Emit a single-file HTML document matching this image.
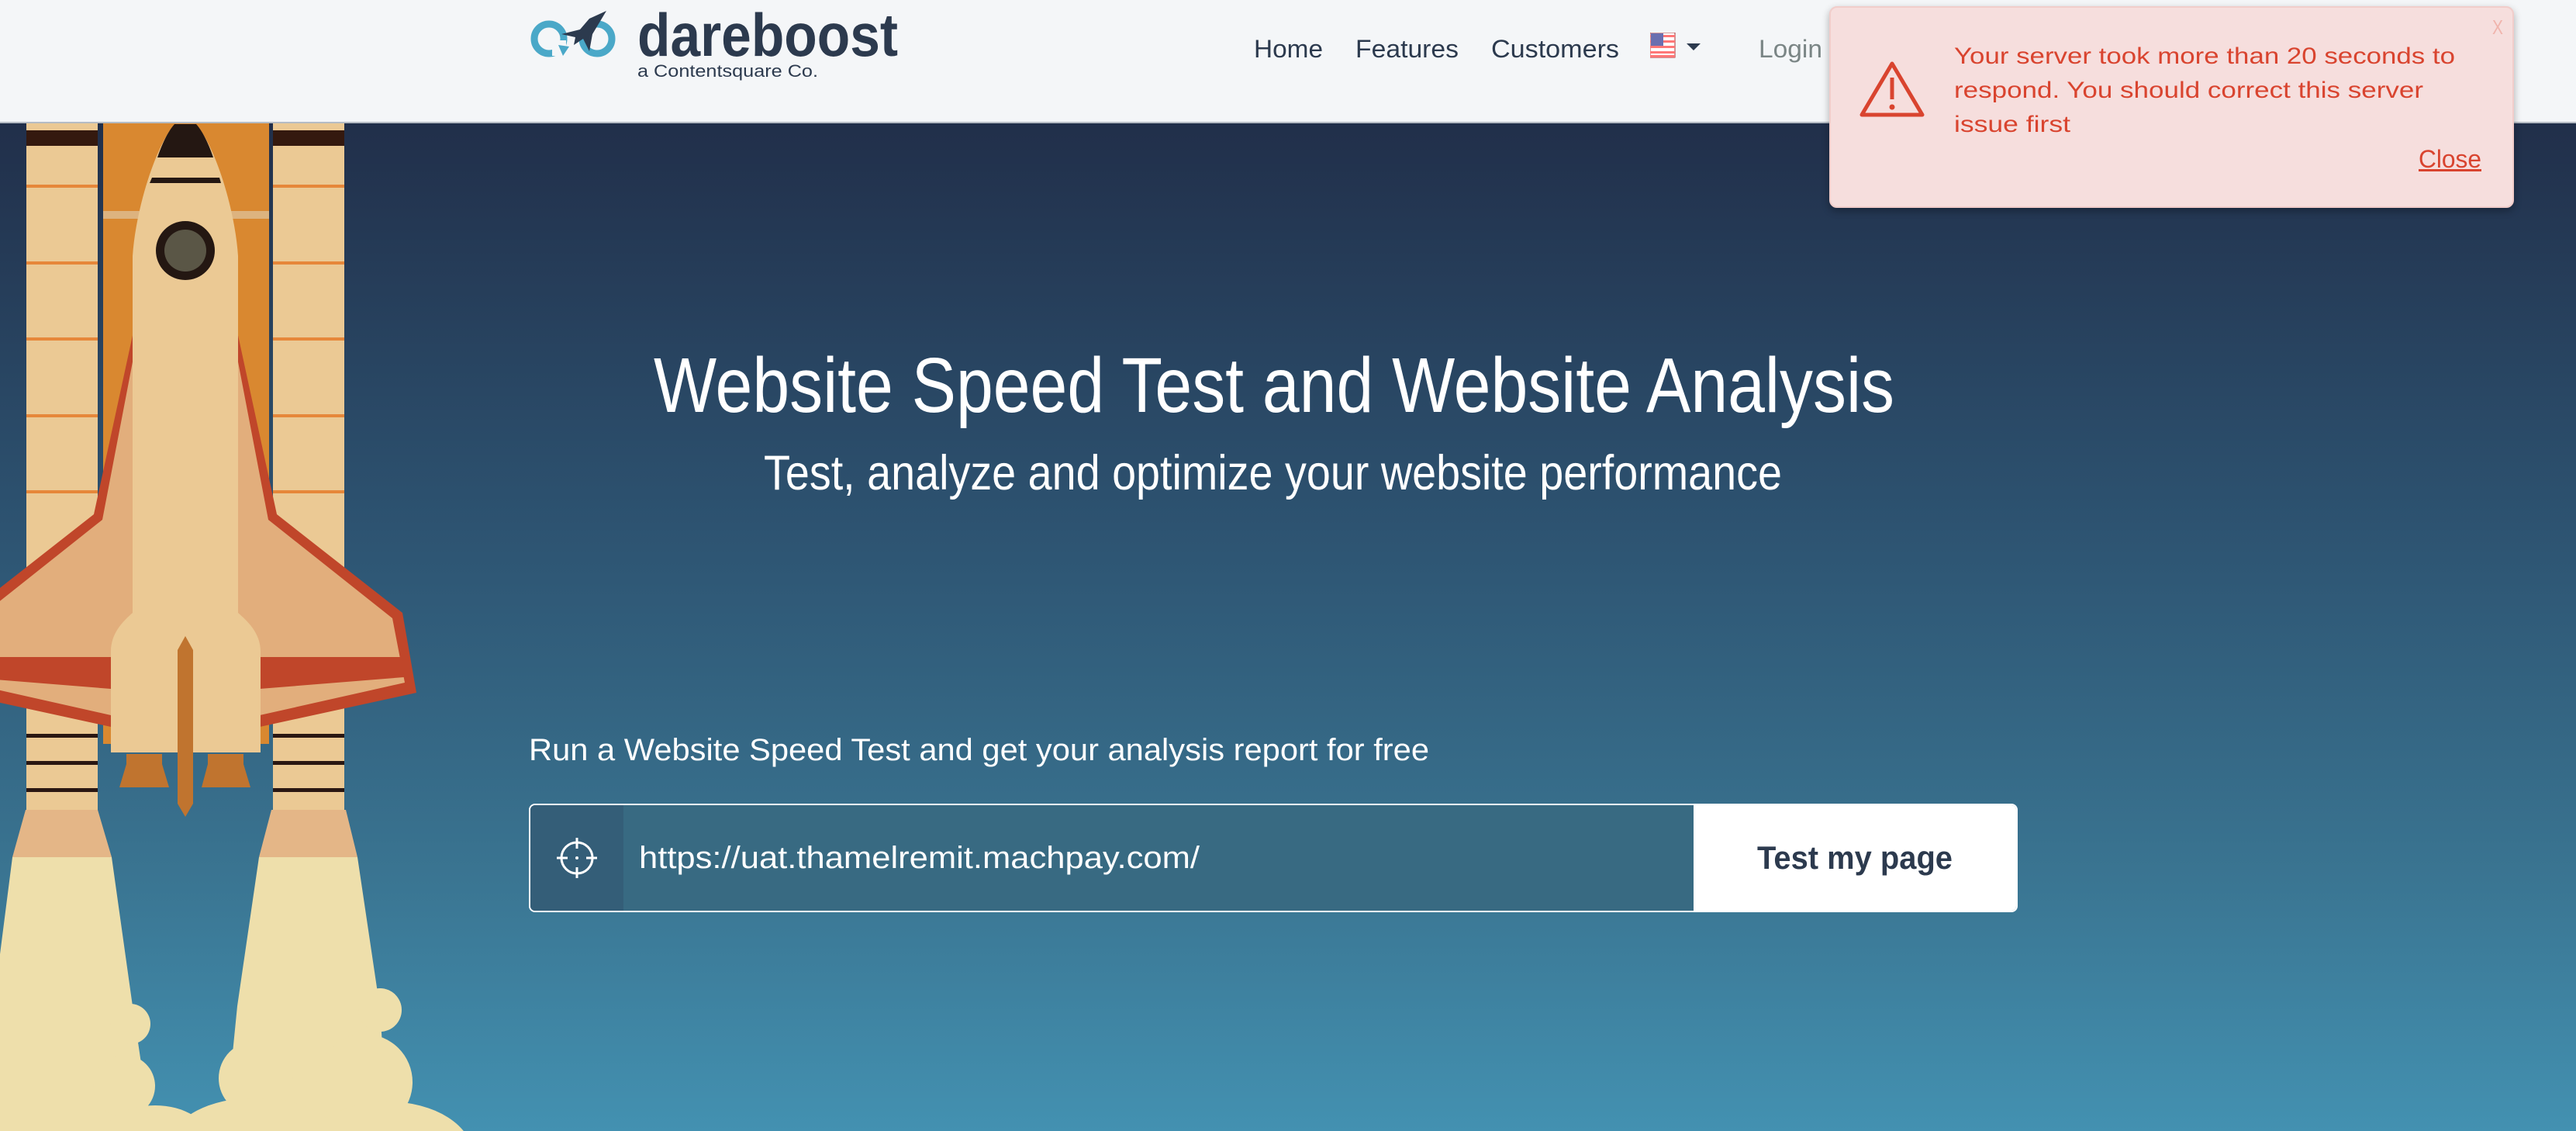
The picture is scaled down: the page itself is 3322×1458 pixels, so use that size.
<!DOCTYPE html>
<html><head><meta charset="utf-8">
<style>
*{margin:0;padding:0;box-sizing:border-box}
html,body{width:3322px;height:1458px;overflow:hidden}
body{position:relative;font-family:"Liberation Sans",sans-serif;background:#f4f6f8}
.f{position:absolute;white-space:nowrap;line-height:1;transform-origin:0 0;display:inline-block}
#hdr{position:absolute;left:0;top:0;width:3322px;height:159px;background:#f4f6f8;border-bottom:2px solid #b5bcc4}
#hero{position:absolute;left:0;top:159px;width:3322px;height:1299px;background:linear-gradient(#212f4a 0%,#2d5371 40%,#3a7592 75%,#4391b1 100%)}
.nav{color:#2c3a4e;font-size:32px}
.w{color:#fff}
#box{position:absolute;left:682px;top:1036px;width:1920px;height:140px;border:2px solid #fff;border-radius:8px;overflow:hidden;background:#386a82}
#ic{position:absolute;left:0;top:0;width:120px;height:100%;background:#345e78}
#btn{position:absolute;left:1500px;top:0;right:0;height:100%;background:#fff}
#alert{position:absolute;left:2359px;top:8px;width:883px;height:260px;background:#f6dedd;border:2px solid #f1cdca;border-radius:10px;box-shadow:0 4px 10px rgba(0,0,0,.3)}
.r{color:#d9442f;font-size:30px}
</style></head><body>
<div id="hdr"></div>
<svg style="position:absolute;left:0;top:0" width="1200" height="160">
 <circle cx="708" cy="50" r="19" fill="none" stroke="#4aa8c8" stroke-width="9"/>
 <circle cx="770" cy="50" r="19" fill="none" stroke="#4aa8c8" stroke-width="9"/>
 <rect x="712" y="52" width="18" height="20" fill="#f4f6f8"/>
 <path d="M720 58 L734 60 L726 72 Z" fill="#4aa8c8"/>
 <path d="M782 14 L760 24 L748 38 L724 44 L742 48 L740 58 L752 50 L760 66 L764 44 Z" fill="#2c3a4e"/>
</svg>
<span class="f" style="left:822px;top:6px;font-size:78px;font-weight:bold;color:#2c3a4e;--w:336">dareboost</span>
<span class="f" style="left:822px;top:81px;font-size:22px;color:#2c3a4e;--w:233">a Contentsquare Co.</span>
<span class="f nav" style="left:1617px;top:47px;--w:89">Home</span>
<span class="f nav" style="left:1748px;top:47px;--w:133">Features</span>
<span class="f nav" style="left:1923px;top:47px;--w:165">Customers</span>
<svg style="position:absolute;left:2128px;top:42px" width="70" height="34">
 <rect x="0" y="0" width="32" height="32" fill="#fff" stroke="#a33" stroke-width="1"/>
 <g fill="#f77"><rect x="0" y="3" width="32" height="3"/><rect x="0" y="10" width="32" height="3"/><rect x="0" y="17" width="32" height="3"/><rect x="0" y="24" width="32" height="3"/><rect x="0" y="29" width="32" height="3"/></g>
 <rect x="1" y="1" width="16" height="16" fill="#6a6fb0"/>
 <path d="M47 14 L65 14 L56 23 Z" fill="#2c3a4e"/>
</svg>
<span class="f nav" style="left:2268px;top:47px;color:#7a8585;--w:82">Login</span>

<div id="hero"></div>
<svg style="position:absolute;left:0;top:0" width="620" height="1458">
 <!-- smoke -->
 <g fill="#eedfab">
  <path d="M16 1105 L144 1105 L170 1290 L195 1458 L0 1458 L0 1230 Z"/>
  <path d="M334 1105 L461 1105 L490 1300 L500 1458 L290 1458 L306 1297 Z"/>
  <circle cx="168" cy="1320" r="26"/>
  <circle cx="160" cy="1400" r="40"/>
  <circle cx="330" cy="1390" r="48"/>
  <circle cx="490" cy="1302" r="28"/>
  <circle cx="470" cy="1395" r="62"/>
  <ellipse cx="200" cy="1470" rx="70" ry="45"/>
  <ellipse cx="330" cy="1475" rx="110" ry="60"/>
  <ellipse cx="500" cy="1490" rx="110" ry="70"/>
 </g>
 <!-- booster nozzles -->
 <path d="M33 1044 L126 1044 L144 1105 L16 1105 Z" fill="#e4b687"/>
 <path d="M350 1044 L446 1044 L461 1105 L334 1105 Z" fill="#e4b687"/>
 <!-- tank -->
 <rect x="133" y="159" width="214" height="800" fill="#d98830"/>
 <rect x="133" y="272" width="214" height="10" fill="#ddb37f"/>
 <!-- boosters -->
 <g>
  <rect x="34" y="159" width="92" height="885" fill="#ebc994"/>
  <rect x="352" y="159" width="92" height="885" fill="#ebc994"/>
  <rect x="34" y="168" width="92" height="20" fill="#34190f"/>
  <rect x="352" y="168" width="92" height="20" fill="#34190f"/>
  <g fill="#e6873a">
   <rect x="34" y="238" width="92" height="4"/><rect x="352" y="238" width="92" height="4"/>
   <rect x="34" y="337" width="92" height="4"/><rect x="352" y="337" width="92" height="4"/>
   <rect x="34" y="435" width="92" height="4"/><rect x="352" y="435" width="92" height="4"/>
   <rect x="34" y="534" width="92" height="4"/><rect x="352" y="534" width="92" height="4"/>
   <rect x="34" y="632" width="92" height="4"/><rect x="352" y="632" width="92" height="4"/>
  </g>
  <g fill="#2a1712">
   <rect x="34" y="946" width="92" height="5"/><rect x="352" y="946" width="92" height="5"/>
   <rect x="34" y="981" width="92" height="5"/><rect x="352" y="981" width="92" height="5"/>
   <rect x="34" y="1016" width="92" height="5"/><rect x="352" y="1016" width="92" height="5"/>
  </g>
 </g>
 <!-- wings -->
 <g id="wing">
  <path d="M300 400 L357 663 L519 790 L537 893 L335 937 L300 937 Z" fill="#c0462a"/>
  <path d="M300 430 L346 670 L506 797 L522 880 L335 922 L300 922 Z" fill="#e2ae7c"/>
  <path d="M335 847 L518 847 L521 873 L335 888 Z" fill="#c0462a"/>
 </g>
 <use href="#wing" transform="translate(478,0) scale(-1,1)"/>
 <!-- body -->
 <path d="M171 970 L171 330 C175 270 200 190 225 160 L253 160 C278 190 303 270 307 330 L307 970 Z" fill="#ebc994"/>
 <path d="M225 160 L253 160 C262 170 270 188 275 203 L203 203 C208 188 216 170 225 160 Z" fill="#241712"/>
 <path d="M196 229 L283 229 L285 236 L193 236 Z" fill="#241712"/>
 <circle cx="239" cy="323" r="38" fill="#241712"/>
 <circle cx="239" cy="323" r="27" fill="#5a5646"/>
 <path d="M143 970 L143 840 C143 815 160 800 171 790 L307 790 C318 800 336 815 336 840 L336 970 Z" fill="#ebc994"/>
 <path d="M163 972 L209 972 L209 985 L218 1015 L154 1015 L163 985 Z" fill="#c0742f"/>
 <path d="M268 972 L314 972 L314 985 L323 1015 L260 1015 L268 985 Z" fill="#c0742f"/>
 <path d="M239 820 L249 838 L249 1036 L239 1053 L229 1036 L229 838 Z" fill="#c0742f"/>
</svg>

<span class="f w" style="left:843px;top:447px;font-size:100px;--w:1600">Website Speed Test and Website Analysis</span>
<span class="f w" style="left:985px;top:579px;font-size:63px;--w:1313">Test, analyze and optimize your website performance</span>
<span class="f w" style="left:682px;top:947px;font-size:40px;--w:1161">Run a Website Speed Test and get your analysis report for free</span>

<div id="box"><div id="ic"></div><div id="btn"></div></div>
<svg style="position:absolute;left:714px;top:1074px" width="60" height="64">
 <circle cx="30" cy="32" r="20" fill="none" stroke="#fff" stroke-width="3"/>
 <path d="M30 6 V20 M30 44 V58 M4 32 H18 M42 32 H56" stroke="#fff" stroke-width="3"/>
 <circle cx="30" cy="32" r="2" fill="#fff"/>
</svg>
<span class="f w" style="left:824px;top:1086px;font-size:40px;--w:723">https://uat.thamelremit.machpay.com/</span>
<span class="f" style="left:2266px;top:1085px;font-size:42px;font-weight:bold;color:#2c3a4e;--w:252">Test my page</span>

<div id="alert"></div>
<svg style="position:absolute;left:2395px;top:76px" width="92" height="80">
 <path d="M45 6 L84 72 L6 72 Z" fill="none" stroke="#d9442f" stroke-width="5" stroke-linejoin="round"/>
 <path d="M45 24 V52" stroke="#d9442f" stroke-width="5"/>
 <circle cx="45" cy="62" r="3.5" fill="#d9442f"/>
</svg>
<span class="f r" style="left:2520px;top:58px;--w:646">Your server took more than 20 seconds to</span>
<span class="f r" style="left:2520px;top:102px;--w:605">respond. You should correct this server</span>
<span class="f r" style="left:2520px;top:146px;--w:150">issue first</span>
<span class="f" style="left:3119px;top:189px;font-size:32px;color:#d9442f;text-decoration:underline;--w:81">Close</span>
<span class="f" style="left:3214px;top:22px;font-size:26px;color:#f0b4ac;--w:14">X</span>

<script>
document.querySelectorAll('.f').forEach(function(e){
 var w=parseFloat(getComputedStyle(e).getPropertyValue('--w'));
 if(w){var a=e.getBoundingClientRect().width;if(a>0)e.style.transform='scaleX('+(w/a)+')';}
});
</script>
</body></html>
